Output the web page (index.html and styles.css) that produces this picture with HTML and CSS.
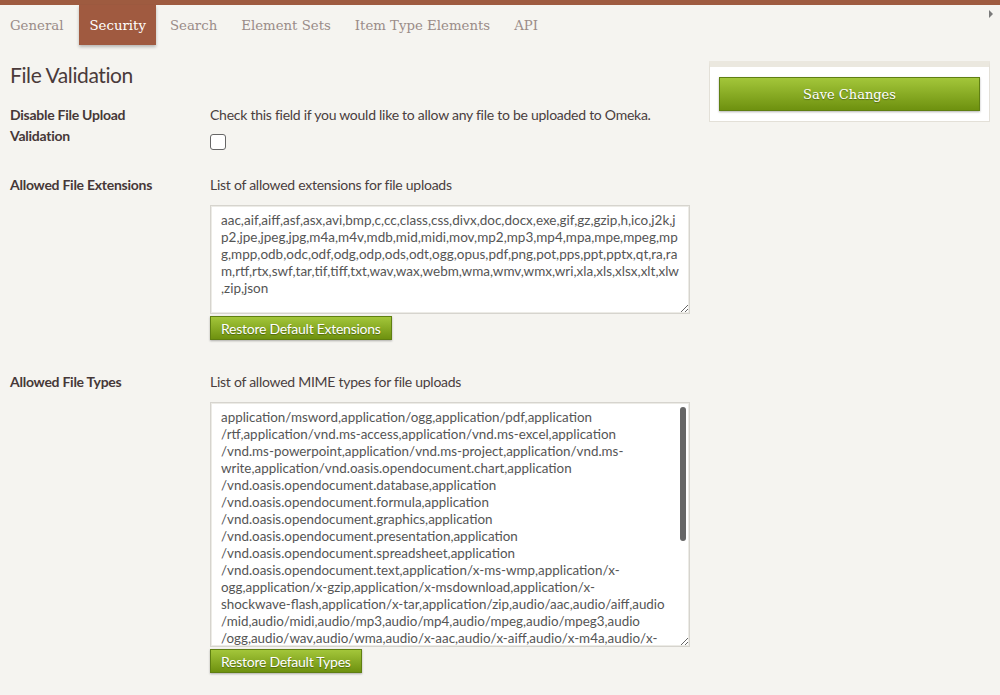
FILE: index.html
```html
<!DOCTYPE html>
<html>
<head>
<meta charset="utf-8">
<link rel="stylesheet" href="styles.css">
</head>
<body>
<div class="topbar"></div>
<nav class="tabs">
  <a class="tab">General</a>
  <a class="tab active">Security</a>
  <a class="tab">Search</a>
  <a class="tab">Element Sets</a>
  <a class="tab">Item Type Elements</a>
  <a class="tab">API</a>
  <span class="more"></span>
</nav>
<div class="page">
  <main class="main">
    <h2 class="heading">File Validation</h2>
    <div class="field">
      <div class="label">Disable File Upload Validation</div>
      <div class="inputs">
        <p class="explanation">Check this field if you would like to allow any file to be uploaded to Omeka.</p>
        <input type="checkbox" class="check">
      </div>
    </div>
    <div class="field field-ext">
      <div class="label">Allowed File Extensions</div>
      <div class="inputs">
        <p class="explanation">List of allowed extensions for file uploads</p>
        <textarea class="ta ta-ext">aac,aif,aiff,asf,asx,avi,bmp,c,cc,class,css,divx,doc,docx,exe,gif,gz,gzip,h,ico,j2k,jp2,jpe,jpeg,jpg,m4a,m4v,mdb,mid,midi,mov,mp2,mp3,mp4,mpa,mpe,mpeg,mpg,mpp,odb,odc,odf,odg,odp,ods,odt,ogg,opus,pdf,png,pot,pps,ppt,pptx,qt,ra,ram,rtf,rtx,swf,tar,tif,tiff,txt,wav,wax,webm,wma,wmv,wmx,wri,xla,xls,xlsx,xlt,xlw,zip,json</textarea>
        <button class="btn small">Restore Default Extensions</button>
      </div>
    </div>
    <div class="field">
      <div class="label">Allowed File Types</div>
      <div class="inputs">
        <p class="explanation">List of allowed MIME types for file uploads</p>
        <div class="ta-wrap">
          <textarea class="ta ta-types">application&#8203;/msword,application&#8203;/ogg,application&#8203;/pdf,application&#8203;/rtf,application&#8203;/vnd.ms-access,application&#8203;/vnd.ms-excel,application&#8203;/vnd.ms-&#8288;powerpoint,application&#8203;/vnd.ms-project,application&#8203;/vnd.ms-write,application&#8203;/vnd.oasis.opendocument.chart,application&#8203;/vnd.oasis.opendocument.database,application&#8203;/vnd.oasis.opendocument.formula,application&#8203;/vnd.oasis.opendocument.graphics,application&#8203;/vnd.oasis.opendocument.presentation,application&#8203;/vnd.oasis.opendocument.spreadsheet,application&#8203;/vnd.oasis.opendocument.text,application&#8203;/x-ms-wmp,application&#8203;/x-ogg,application&#8203;/x-gzip,application&#8203;/x-msdownload,application&#8203;/x-shockwave-&#8288;flash,application&#8203;/x-tar,application&#8203;/zip,audio&#8203;/aac,audio&#8203;/aiff,audio&#8203;/mid,audio&#8203;/midi,audio&#8203;/mp3,audio&#8203;/mp4,audio&#8203;/mpeg,audio&#8203;/mpeg3,audio&#8203;/ogg,audio&#8203;/wav,audio&#8203;/wma,audio&#8203;/x-aac,audio&#8203;/x-aiff,audio&#8203;/x-m4a,audio&#8203;/x-midi,audio&#8203;/x-mp3,audio&#8203;/x-mp4,audio&#8203;/x-mpeg,audio&#8203;/x-mpeg3,audio&#8203;/x-mpegaudio,audio&#8203;/x-ms-wax,audio&#8203;/x-realaudio,audio&#8203;/x-wav,audio&#8203;/x-wma,image&#8203;/bmp,image&#8203;/gif,image&#8203;/icon,image&#8203;/jpeg,image&#8203;/pjpeg,image&#8203;/png,image&#8203;/tiff,image&#8203;/x-icon,image&#8203;/x-ms-bmp,text&#8203;/css,text&#8203;/plain,text&#8203;/richtext,text&#8203;/rtf,video&#8203;/asf,video&#8203;/avi,video&#8203;/divx,video&#8203;/mp4,video&#8203;/mpeg,video&#8203;/msvideo,video&#8203;/ogg,video&#8203;/quicktime,video&#8203;/webm,video&#8203;/x-ms-wmv,video&#8203;/x-msvideo,text&#8203;/csv,application&#8203;/json</textarea>
          <span class="thumb"></span>
        </div>
        <button class="btn small">Restore Default Types</button>
      </div>
    </div>
  </main>
  <aside class="sidebar">
    <div class="panel">
      <button class="btn big">Save Changes</button>
    </div>
  </aside>
</div>
</body>
</html>
```

FILE: styles.css
```css
html, body {
  margin: 0;
  padding: 0;
}
body {
  background: #f5f4f0;
  font-family: "Lato", "Open Sans", sans-serif;
  font-size: 14px;
  color: #4a3e3e;
  width: 1000px;
  height: 695px;
  overflow: hidden;
}
.topbar {
  height: 5px;
  background: #9e5b40;
}
.tabs {
  display: flex;
  align-items: stretch;
  gap: 4px;
  height: 40px;
}
.tab {
  display: flex;
  align-items: center;
  padding: 1px 10px 0;
  font-family: "DejaVu Serif", serif;
  font-size: 13.3px;
  color: #9a8c88;
}
.tab:first-child {
  padding-right: 12px;
}
.tab.active {
  background: #a05a40;
  color: #ffffff;
  box-shadow: 0 2px 3px rgba(0,0,0,0.25);
}
.more {
  margin-left: auto;
  margin-right: 7px;
  margin-top: 5px;
  width: 0;
  height: 0;
  border-left: 4px solid #7a7a7a;
  border-top: 4px solid transparent;
  border-bottom: 4px solid transparent;
}
.page {
  display: flex;
  padding: 0 10px;
  gap: 19px;
}
.main {
  width: 680px;
}
.heading {
  margin: 17px 0 16px;
  font-size: 21px;
  letter-spacing: -0.4px;
  line-height: 26px;
  font-weight: normal;
  color: #4a3a3a;
}
.field {
  display: flex;
  margin-bottom: 23px;
}
.field-ext {
  margin-bottom: 31px;
}
.label {
  width: 200px;
  flex: none;
  font-weight: bold;
  line-height: 21px;
  letter-spacing: -0.26px;
  padding-right: 40px;
  box-sizing: border-box;
  color: #463838;
}
.inputs {
  width: 480px;
  display: flex;
  flex-direction: column;
  align-items: flex-start;
}
.explanation {
  margin: 0 0 10px;
  line-height: 21px;
  letter-spacing: -0.26px;
  color: #4a3e3e;
}
.check {
  appearance: none;
  -webkit-appearance: none;
  margin: -1px 0 1px;
  width: 16px;
  height: 16px;
  border: 1px solid #666;
  border-radius: 3px;
  background: #fff;
  box-sizing: border-box;
}
.ta {
  display: block;
  width: 480px;
  box-sizing: border-box;
  margin: 0 0 2px;
  padding: 6px 10px;
  border: 1px solid #d6d4ce;
  box-shadow: inset 0 0 0 1px #ecebe6;
  background: #fff;
  font-family: "Lato", "Open Sans", sans-serif;
  font-size: 13.5px;
  line-height: 17px;
  color: #555;
  overflow-wrap: break-word;
}
.ta-ext {
  height: 109px;
}
.ta-wrap {
  position: relative;
}
.ta-types {
  height: 245px;
  padding-right: 20px;
  font-size: 13.4px;
  overflow-y: auto;
  scrollbar-width: none;
}
.ta-types::-webkit-scrollbar {
  display: none;
}
.thumb {
  position: absolute;
  right: 4px;
  top: 5px;
  width: 6px;
  height: 134px;
  border-radius: 3px;
  background: #666;
}
.btn {
  border: 1px solid #5f7f12;
  background: linear-gradient(#a3c63a, #6e910f);
  color: #fff;
  text-shadow: 0 1px 1px rgba(0,0,0,0.35);
  box-shadow: 0 1px 2px rgba(0,0,0,0.3);
  cursor: pointer;
  margin: 0;
}
.btn.small {
  height: 24px;
  padding: 0 10px;
  font-family: "Lato", "Open Sans", sans-serif;
  font-size: 14px;
  letter-spacing: -0.26px;
}
.sidebar {
  width: 281px;
  padding-top: 16px;
}
.panel {
  background: #fff;
  border: 1px solid #e3e0d8;
  border-top: 6px solid #ebe8df;
  padding: 10px 9px 10px;
}
.btn.big {
  display: block;
  width: 100%;
  height: 34px;
  font-family: "DejaVu Serif", serif;
  font-size: 13px;
}
```
